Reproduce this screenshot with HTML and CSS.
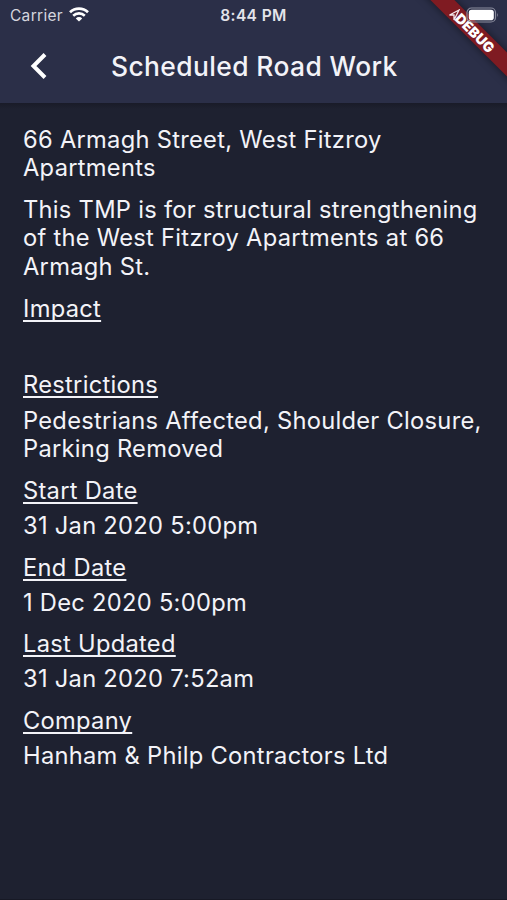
FILE: index.html
```html
<!DOCTYPE html>
<html lang="en">
<head>
  <meta charset="UTF-8" />
  <meta name="viewport" content="width=device-width, initial-scale=1.0"/>
  <title>Scheduled Road Work</title>
  <link rel="stylesheet" href="styles.css">
</head>
<body>
  <div class="screen">
    <header class="header">
      <div class="ribbon"><span>DEBUG</span></div>
      <div class="status">
        <div class="carrier">
          <span>Carrier</span>
          <svg class="wifi" viewBox="0 0 20 15" width="20" height="15">
            <path d="M1 5.2a13 13 0 0 1 18 0" fill="none" stroke="#fff" stroke-width="2.7"/>
            <path d="M4.2 8.7a8.4 8.4 0 0 1 11.6 0" fill="none" stroke="#fff" stroke-width="2.6"/>
            <path d="M10 14.6l-3.2-3.2a4.6 4.6 0 0 1 6.4 0z" fill="#fff"/>
          </svg>
        </div>
        <span class="time">8:44 PM</span>
        <div class="right">
          <svg class="location" viewBox="0 0 12 12" width="12" height="12">
            <path d="M11 1L1.500 6H6v5z" fill="none" stroke="#f4e9ed" stroke-width="1.3"/>
          </svg>
          <svg class="battery" viewBox="0 0 33 16" width="33" height="16">
            <rect x="1" y="1" width="28.500" height="14" rx="4.500" fill="none" stroke="#8b8d9e" stroke-width="1.200"/>
            <rect x="2.800" y="2.800" width="25" height="10.400" rx="2.800" fill="#fff"/>
            <path d="M31 5.800q1.600 2.200 0 4.400z" fill="#8b8d9e"/>
          </svg>
        </div>
      </div>
      <div class="bar">
        <button class="back" aria-label="Back">
          <svg viewBox="0 0 18 28" width="18" height="28">
            <path d="M15 2.500L3.500 14 15 25.500" fill="none" stroke="#fff" stroke-width="4"/>
          </svg>
        </button>
        <h1>Scheduled Road Work</h1>
      </div>
    </header>

    <main class="details">
      <p>66 Armagh Street, West Fitzroy<br>Apartments</p>
      <p>This TMP is for structural strengthening<br>of the West Fitzroy Apartments at 66<br>Armagh St.</p>
      <section>
        <h2>Impact</h2>
        <p></p>
      </section>
      <section>
        <h2>Restrictions</h2>
        <p>Pedestrians Affected, Shoulder Closure,<br>Parking Removed</p>
      </section>
      <section>
        <h2>Start Date</h2>
        <p>31 Jan 2020 5:00pm</p>
      </section>
      <section>
        <h2>End Date</h2>
        <p>1 Dec 2020 5:00pm</p>
      </section>
      <section>
        <h2>Last Updated</h2>
        <p>31 Jan 2020 7:52am</p>
      </section>
      <section>
        <h2>Company</h2>
        <p>Hanham &amp; Philp Contractors Ltd</p>
      </section>
    </main>
  </div>
</body>
</html>
```
FILE: styles.css
```css
* {
  box-sizing: border-box;
}

body {
  margin: 0;
  background-color: #1e2130;
  color: #f3f3f8;
  font-family: Inter, "Liberation Sans", sans-serif;
}

.screen {
  width: 507px;
  height: 900px;
  overflow: hidden;
  border-bottom: 1px solid #171925;
}

.header {
  position: relative;
  height: 103px;
  overflow: hidden;
  background-color: #2b2f48;
}

.status {
  position: relative;
  display: grid;
  grid-template-columns: 1fr auto 1fr;
  align-items: center;
  height: 29px;
  padding: 0 8px 0 10px;
}

.carrier {
  display: flex;
  align-items: center;
  gap: 6px;
  font-size: 15.5px;
  letter-spacing: 0.3px;
  color: #d5d6de;
}

.carrier span,
.time {
  padding-top: 1px;
}

.time {
  margin-right: 2px;
  font-size: 15.5px;
  font-weight: 600;
  letter-spacing: 0.4px;
  color: #e3e4ea;
}

.right {
  display: flex;
  align-items: center;
  justify-content: flex-end;
  gap: 6px;
}

.bar {
  display: flex;
  align-items: center;
  height: 74px;
  padding-left: 30px;
}

.back {
  display: flex;
  padding: 0;
  border: none;
  background: none;
}

.bar h1 {
  margin: 0 0 1px 63px;
  font-size: 26.4px;
  font-weight: 500;
  letter-spacing: 0.4px;
  white-space: nowrap;
}

/* corner ribbon, sits under the status icons */
.ribbon {
  position: absolute;
  top: 23.5px;
  left: 405px;
  display: flex;
  align-items: center;
  justify-content: center;
  width: 140px;
  height: 16.5px;
  padding-left: 1px;
  background-color: #7f1b22;
  box-shadow: 0 0 8px rgba(0, 0, 0, 0.5);
  transform: rotate(45deg);
  font-size: 14px;
  font-weight: 900;
  color: #fff;
}

.details {
  display: flex;
  flex-direction: column;
  gap: 13.5px;
  padding: 22.9px 20px 0 23px;
  background: linear-gradient(#191b28, #1e2130) no-repeat;
  background-size: 100% 6px;
}

.details p,
.details h2 {
  margin: 0;
  min-height: 28.35px;
  font-size: 23.7px;
  font-weight: 400;
  line-height: 28.35px;
  letter-spacing: 0.28px;
  white-space: nowrap;
}

.details h2 {
  align-self: flex-start;
  text-decoration: underline;
  text-decoration-thickness: 1.5px;
  text-underline-offset: 3px;
  text-decoration-skip-ink: none;
}

.details section {
  display: flex;
  flex-direction: column;
  gap: 6.7px;
}
```
